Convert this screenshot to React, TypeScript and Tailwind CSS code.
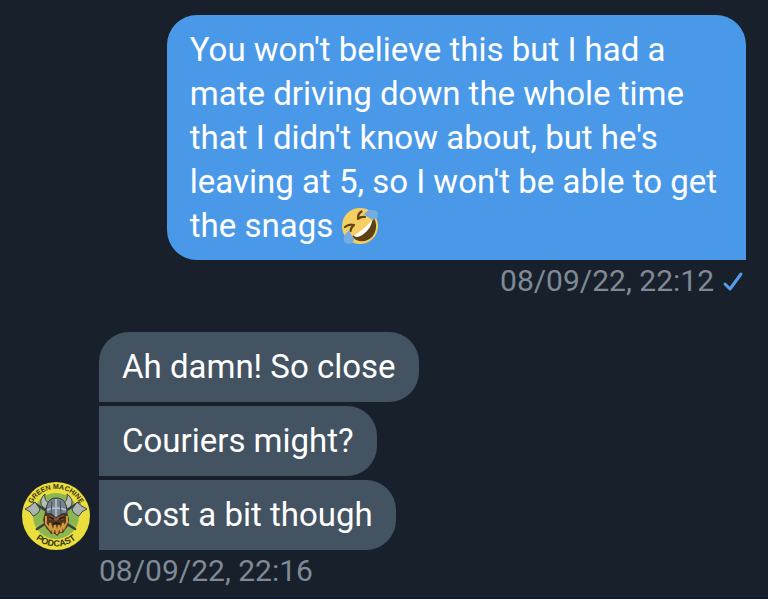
import type { ReactNode } from "react";
import clsx from "clsx";

const replies = ["Ah damn! So close", "Couriers might?", "Cost a bit though"];

function LaughingEmoji() {
  return (
    <svg viewBox="0 0 38 38" role="img" aria-label="rolling on the floor laughing" className="inline-block size-[38px] align-[-8px]">
      <circle cx="19" cy="19" r="18" fill="#f6cf62" />
      {/* mouth and teeth */}
      <path d="M33 11C29 19 21 26 11 29C15 36 26 36 31.500 29.500C36 24 36 16 33 11Z" fill="#5f4213" />
      <path d="M31 13.500C25 20 19 25 12.500 28.500C14 30.500 18 30.500 22 27.500C27 24 31 18 31 13.500Z" fill="#fff" />
      <path d="M4 20Q8 16.500 13 18Q10 20 9.500 24" fill="none" stroke="#5f4213" strokeWidth="2.200" strokeLinecap="round" strokeLinejoin="round" />
      <path d="M20.500 4.500Q16.500 7 17 12Q19.500 9.500 24 10" fill="none" stroke="#5f4213" strokeWidth="2.200" strokeLinecap="round" strokeLinejoin="round" />
      {/* tears */}
      <path d="M23 8C25 3 33 1 36.500 5C38 9 35.500 13 31.500 12.500C28 12 27 9 23 8Z" fill="#75ade0" />
      <path d="M8.500 23C4 26 1 32 4 36C8 38 13 36 13 32C12.500 29 9 28 8.500 23Z" fill="#75ade0" />
    </svg>
  );
}

function Avatar() {
  return (
    <svg viewBox="0 0 68 68" role="img" aria-label="Green Machine Podcast" className="size-[68px] shrink-0">
      <defs>
        <path id="arc-top" d="M7 34A27 27 0 0 1 61 34" />
        <path id="arc-bottom" d="M3.500 34A30.500 30.500 0 0 0 64.500 34" />
      </defs>
      <circle cx="34" cy="34" r="34" fill="#e9de3c" />
      <circle cx="34" cy="34" r="23" fill="#8cb650" />
      {/* crossed axes */}
      <g stroke="#3c4038" strokeWidth="2.500" strokeLinecap="round">
        <path d="M12 21L53 47" />
        <path d="M56 21L15 47" />
      </g>
      <g fill="#aab4b2" stroke="#3c4545" strokeWidth="1">
        <path d="M13 20L18 27Q17 32 11 34Q9 29 3 27Q8 25 13 20Z" />
        <path d="M55 20L50 27Q51 32 57 34Q59 29 65 27Q60 25 55 20Z" />
      </g>
      {/* beard and face */}
      <path d="M23 30L21 38L24 46L27 49L29 52L33 52L35 54L38 51L41 51L43 48L46 44L47 37L45 30Z" fill="#51351b" />
      <path d="M27 33L32 35L34 34L37 35L42 33L41 38L37 37L34 39L31 37L27 38Z" fill="#8d5c33" />
      <path d="M24 34L24 42L28 47L28 41L31 50L33 43L35 52L37 43L39 50L41 41L42 46L45 40L45 34" fill="none" stroke="#cf9a3e" strokeWidth="2" />
      <path d="M27 35L32 37M42 35L37 37M31 42L34 41L38 42" fill="none" stroke="#221a14" strokeWidth="1.800" />
      {/* horned helmet */}
      <path d="M26 27C17 26 17 17 23 12C22 18 25 21 29 21ZM43 27C52 26 52 17 45 12C46 18 43 21 40 21Z" fill="#b9bcb4" stroke="#384044" />
      <path d="M24 31C24 20 28 16 34 16C41 16 45 20 45 31L39 32L34 36L30 32Z" fill="#77848f" stroke="#303b46" />
      <path d="M25 28Q34 24 44 28M34 17V34" fill="none" stroke="#bcc6cb" strokeWidth="1.500" />
      <path d="M30 19L29 31M38 19L39 31" stroke="#43505e" />
      <g fill="#38320f" textAnchor="middle" className="font-['Liberation_Sans_Narrow','Liberation_Sans',sans-serif] font-bold">
        <text fontSize="7"><textPath href="#arc-top" startOffset="50%">GREEN MACHINE</textPath></text>
        <text fontSize="9"><textPath href="#arc-bottom" startOffset="50%">PODCAST</textPath></text>
      </g>
    </svg>
  );
}

function Bubble({ children, className }: { children: ReactNode; className: string }) {
  return <p className={clsx("px-[23px] pt-[13px] text-[33px] leading-[44px]", className)}>{children}</p>;
}

export default function App() {
  return (
    <main className="min-h-screen border-b-2 border-[#0f1b30] bg-[#18202b] px-[22px] pt-[15px] font-['Roboto',sans-serif] text-white">
      <section className="flex flex-col items-end">
        <Bubble className="max-w-4/5 rounded-[30px] rounded-br-none bg-[#4a99e9] pb-3">
          You won't believe this but I had a mate driving down the whole time that I didn't know about, but he's
          leaving at 5, so I won't be able to get the snags <LaughingEmoji />
        </Bubble>
        <div className="flex items-center gap-2 text-[30px] leading-[42px] text-[#7f8a96]">
          <time dateTime="2022-09-08T22:12">08/09/22, 22:12</time>
          <svg viewBox="0 0 24 24" role="img" aria-label="Sent" className="size-6">
            <path d="M3 15L8 20L19 5" fill="none" stroke="#559fe6" strokeWidth="3" strokeLinecap="round" strokeLinejoin="round" />
          </svg>
        </div>
      </section>

      <section className="mt-[30px] flex items-end gap-[9px]">
        <Avatar />
        <div className="flex flex-col items-start gap-1">
          {replies.map((reply, i) => (
            <Bubble key={reply} className={clsx("rounded-r-[30px] bg-[#435362] pb-[13px]", i === 0 && "rounded-tl-[30px]")}>
              {reply}
            </Bubble>
          ))}
        </div>
      </section>
      <time dateTime="2022-09-08T22:16" className="ml-[77px] block text-[30px] leading-[42px] text-[#7f8a96]">
        08/09/22, 22:16
      </time>
    </main>
  );
}
